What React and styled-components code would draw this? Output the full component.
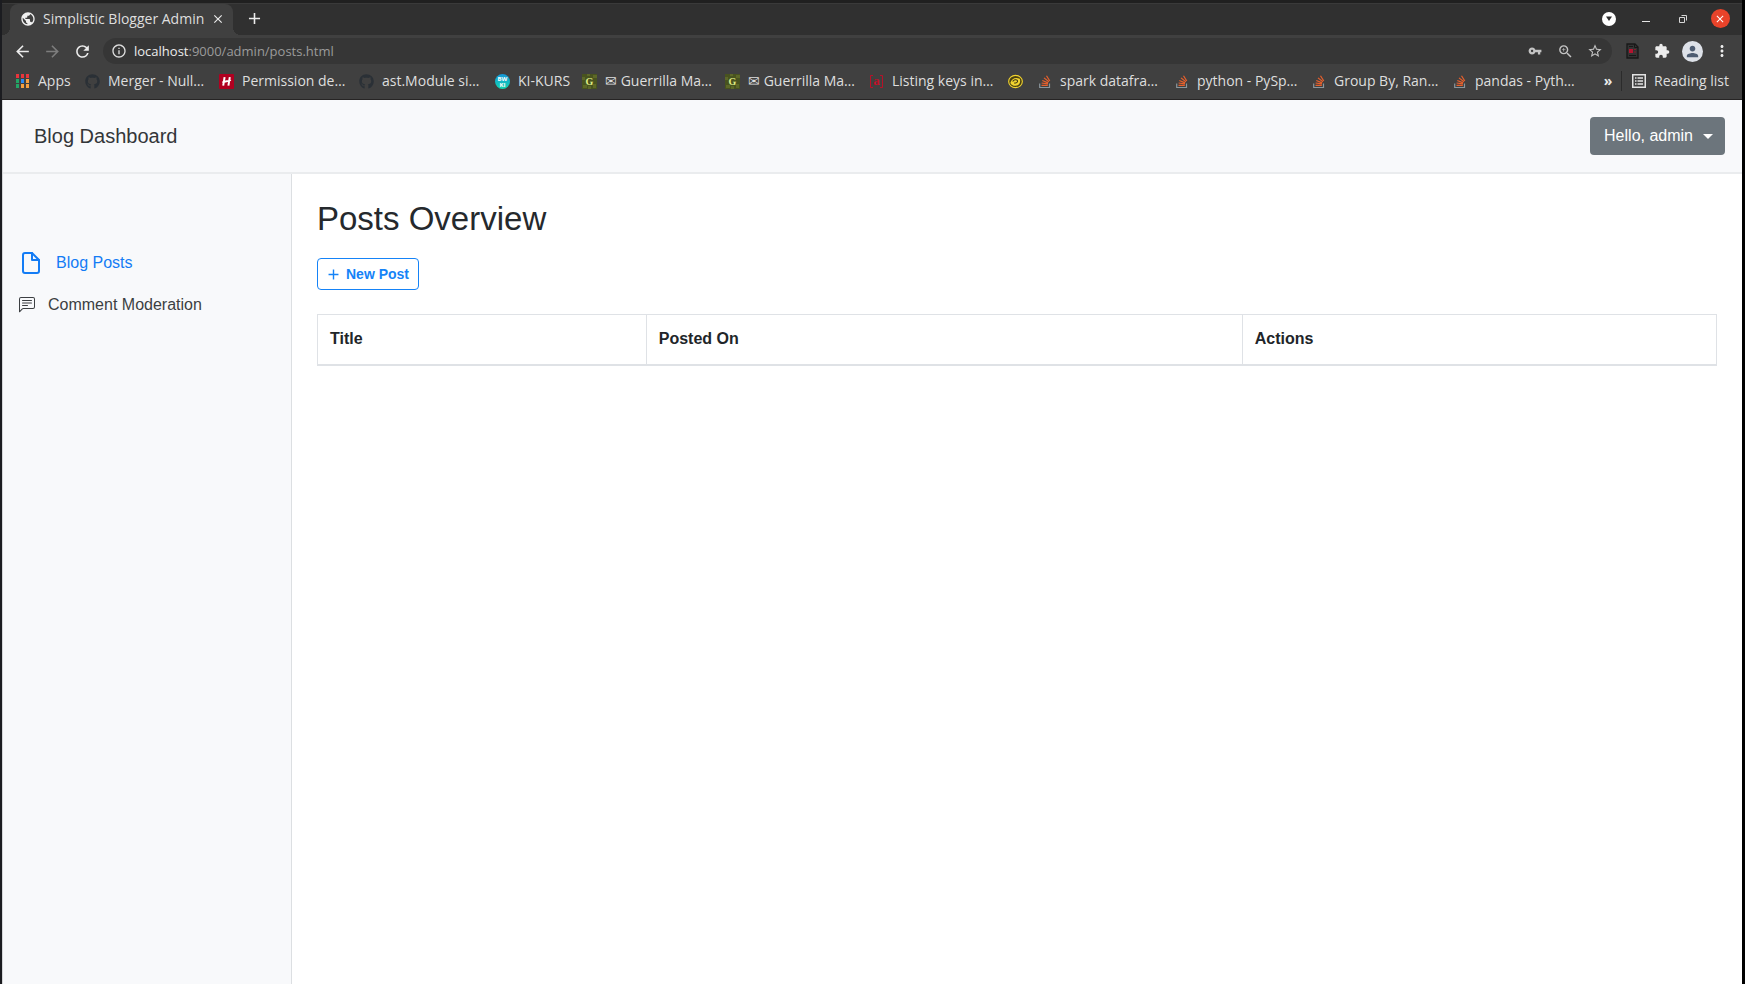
import React from "react";
import styled, { createGlobalStyle, css } from "styled-components";
import {
  MdAdd,
  MdArrowBack,
  MdArrowForward,
  MdClose,
  MdExtension,
  MdInfoOutline,
  MdMoreVert,
  MdPerson,
  MdPublic,
  MdRefresh,
  MdStarBorder,
  MdVpnKey,
  MdZoomIn,
} from "react-icons/md";
import { FaGithub } from "react-icons/fa";
import { FiFile } from "react-icons/fi";
import { BsChatLeftText } from "react-icons/bs";

const GlobalStyle = createGlobalStyle`
  *, *::before, *::after { box-sizing: border-box; }
  body {
    margin: 0;
    background: #1b1c20;
    font-family: "Liberation Sans", Arial, sans-serif;
    color: #212529;
  }
  button, input { font: inherit; color: inherit; }
  svg { display: block; flex: none; }
`;

const Window = styled.div`
  display: flex;
  flex-direction: column;
  min-height: 100vh;
  border-left: 2px solid #1b1c20;
  border-right: 3px solid #000;
`;

const Chrome = styled.header`
  flex: none;
  border-top: 3px solid #202020;
  border-bottom: 1px solid #262424;
  background: #404040;
  color: #dedede;
  font-family: "Open Sans", "Noto Sans", sans-serif;
  font-size: 14px;
  line-height: 20px;
`;

const TabStrip = styled.div`
  display: flex;
  align-items: center;
  height: 32px;
  padding: 0 7px 0 8px;
  background: #303030;
  border-top: 1px solid #3a3a3a;
`;

const Tab = styled.div`
  position: relative;
  display: flex;
  align-items: center;
  width: 223px;
  height: 31px;
  padding: 0 8px 2px 10px;
  gap: 7px;
  border-radius: 8px 8px 0 0;
  background: #404040;
  white-space: nowrap;

  &::before,
  &::after {
    content: "";
    position: absolute;
    bottom: 0;
    width: 8px;
    height: 8px;
  }

  &::before {
    right: 100%;
    background: radial-gradient(circle at 0 0, transparent 8px, #404040 8px);
  }

  &::after {
    left: 100%;
    background: radial-gradient(circle at 100% 0, transparent 8px, #404040 8px);
  }
`;

const TabTitle = styled.span`
  flex: 1;
`;

const IconButton = styled.button`
  display: flex;
  align-items: center;
  justify-content: center;
  flex: none;
  width: ${(p) => p.$width || 30}px;
  height: 24px;
  padding: 0;
  border: 0;
  background: none;
  color: ${(p) => p.$color || "#ececec"};
`;

const NewTab = styled(IconButton)`
  width: 42px;
  margin-bottom: 2px;
`;

const EndGroup = styled.div`
  display: flex;
  align-items: center;
  margin-left: auto;
  gap: 7px;
`;

const WindowControls = styled(EndGroup)`
  padding-bottom: 2px;
`;

const Disc = styled.span`
  display: flex;
  align-items: center;
  justify-content: center;
  width: ${(p) => p.$size}px;
  height: ${(p) => p.$size}px;
  border-radius: 50%;
  background: ${(p) => p.$fill};
  color: ${(p) => p.$color};
`;

const Toolbar = styled.div`
  display: flex;
  align-items: center;
  height: 32px;
  padding: 0 5px;
`;

const AddressBar = styled.form`
  display: flex;
  align-items: center;
  flex: 1;
  height: 26px;
  margin: 0 5px 0 6px;
  padding: 0 2px 0 8px;
  border-radius: 13px;
  background: #363636;
`;

const Url = styled.a`
  flex: 1;
  margin-left: 7px;
  color: #9b9b9b;
  font-size: 13px;
  text-decoration: none;

  strong {
    color: #ececec;
    font-weight: 400;
  }
`;

const BookmarksBar = styled.nav`
  display: flex;
  align-items: center;
  height: 32px;
  padding: 0 13px 4px 14px;
`;

const Bookmark = styled.a`
  display: flex;
  align-items: center;
  flex: none;
  width: ${(p) => p.$width}px;
  gap: 8px;
  color: #dedede;
  text-decoration: none;
  white-space: nowrap;
`;

const ReadingList = styled.button`
  display: flex;
  align-items: center;
  gap: 8px;
  padding: 0 0 0 10px;
  border: 0;
  border-left: 1px solid #2b2b2b;
  background: none;
  white-space: nowrap;
`;

const Page = styled.div`
  display: flex;
  flex: 1;
  flex-direction: column;
  background: #fff;
  border-left: 1px solid #d5d7d9;
  font-size: 16px;
  line-height: 26px;
`;

const Navbar = styled.div`
  display: flex;
  align-items: center;
  justify-content: space-between;
  height: 74px;
  padding: 0 17px 0 31px;
  background: #f8f9fb;
  border-bottom: 2px solid #eaecee;
`;

const Brand = styled.a`
  color: #333639;
  font-size: 20px;
  line-height: 30px;
  text-decoration: none;
`;

const UserMenu = styled.button`
  display: flex;
  align-items: center;
  gap: 10px;
  height: 38px;
  padding: 0 12px 0 14px;
  border: 0;
  border-radius: 4px;
  background: #6c757c;
  color: #fff;
  white-space: nowrap;

  &::after {
    content: "";
    border: 5px solid transparent;
    border-top-color: #fff;
    border-bottom: 0;
  }
`;

const Body = styled.div`
  display: flex;
  flex: 1;
`;

const Sidebar = styled.nav`
  display: flex;
  flex: none;
  flex-direction: column;
  width: 289px;
  padding: 68px 16px 0;
  background: #f8f9fb;
  border-right: 1px solid #dcdfe2;
`;

const SideLink = styled.a`
  display: flex;
  align-items: center;
  gap: 13px;
  height: 42px;
  color: #3c3f42;
  text-decoration: none;

  ${(p) =>
    p.$active &&
    css`
      color: #137cf5;
    `}
`;

const Main = styled.main`
  flex: 1;
  padding: 25px;
`;

const Title = styled.h1`
  margin: 0;
  color: #25292d;
  font-size: 33px;
  font-weight: 400;
  line-height: 40px;
`;

const NewPost = styled.button`
  display: flex;
  align-items: center;
  gap: 4px;
  height: 32px;
  margin: 19px 0 24px;
  padding: 0 9px 0 7px;
  border: 1px solid #1583f7;
  border-radius: 4px;
  background: #fff;
  color: #1583f7;
  font-size: 14px;
  font-weight: 700;
`;

const Table = styled.table`
  width: 100%;
  border-collapse: collapse;
  table-layout: fixed;
`;

const HeadCell = styled.th`
  width: ${(p) => p.$width};
  height: 50px;
  padding: 0 12px;
  border: 1px solid #dfe2e6;
  border-bottom-width: 2px;
  text-align: left;
`;

const AppsIcon = () => (
  <svg width="14" height="14" viewBox="0 0 14 14">
    {[
      ["#e8353c", 0, 0],
      ["#e8353c", 5, 0],
      ["#e8353c", 10, 0],
      ["#23a566", 0, 5],
      ["#2a8bf2", 5, 5],
      ["#f6a040", 10, 5],
      ["#23a566", 0, 10],
      ["#f6a040", 5, 10],
      ["#f6a040", 10, 10],
    ].map(([fill, x, y]) => (
      <rect key={`${x}-${y}`} x={x} y={y} width="3" height="4" fill={fill} />
    ))}
  </svg>
);

const GithubIcon = () => <FaGithub size={15} color="#2a3036" />;

const HIcon = () => (
  <svg width="15" height="15" viewBox="0 0 15 15">
    <rect width="15" height="15" rx="1" fill="#b00020" />
    <path d="M5.6 3.2 4.2 11.6M10.8 3.2 9.4 11.6M3.4 8.6C6 7 9 7.6 11.8 6" stroke="#fff" strokeWidth="2" fill="none" />
  </svg>
);

const KiIcon = () => (
  <svg width="15" height="15" viewBox="0 0 15 15">
    <defs>
      <linearGradient id="ki" x1="0" y1="0" x2="0" y2="1">
        <stop offset="0" stopColor="#1595d8" />
        <stop offset="1" stopColor="#12d8b0" />
      </linearGradient>
    </defs>
    <circle cx="7.5" cy="7.5" r="7.5" fill="url(#ki)" />
    <text x="7.5" y="7" fontSize="6" fontWeight="700" textAnchor="middle" fill="#fff">BW</text>
    <text x="7.5" y="13" fontSize="6" fontWeight="700" textAnchor="middle" fill="#fff">KI</text>
  </svg>
);

const GuerrillaIcon = () => (
  <svg width="15" height="15" viewBox="0 0 15 15">
    <rect width="15" height="15" fill="#48531f" />
    <path d="M0 3h3v3H0zM11 1h4v3h-4zM1 11h4v3H1zM11 10h3v4h-3zM5 0h3v2H5zM6 12h3v3H6z" fill="#5d6828" />
    <text x="7.5" y="11" fontSize="10" fontWeight="700" fontFamily="Liberation Serif" textAnchor="middle" fill="#e0ee88">G</text>
  </svg>
);

const ListingIcon = () => (
  <svg width="15" height="15" viewBox="0 0 15 15">
    <path d="M4 1.5H1.5v12H4M11 1.5h2.500v12H11" stroke="#b81128" fill="none" />
    <text x="7.500" y="11" fontSize="13" fontWeight="700" fontFamily="Liberation Serif" textAnchor="middle" fill="#c01128">a</text>
  </svg>
);

const CoinIcon = () => (
  <svg width="15" height="15" viewBox="0 0 16 15">
    <ellipse cx="8" cy="7.500" rx="7.300" ry="6.500" fill="#4a4010" stroke="#f1d32f" strokeWidth="1.200" />
    <path d="M2.500 9C4 4 8 2.500 12.500 4.500 14 8 12 12 8 12 5 12 3.500 11 2.500 9z" fill="#f1d32f" />
    <path d="M5 7.500C6 5.500 9 5 10 6.500 11 8.500 8 9.500 6.500 9" stroke="#3d3716" fill="none" strokeWidth="1.100" />
  </svg>
);

const StackIcon = () => (
  <svg width="13" height="15" viewBox="0 0 13 15">
    <path d="M.7 9.500v4h9.800v-4" stroke="#8b969c" strokeWidth="1.200" fill="none" />
    <path d="M2.500 11.400h6.300M2.600 9l6.300.8M3.300 6.500l5.800 2.400M5 3.900l4.900 3.900M7.500 1.700l3.300 5.300" stroke="#e8602c" strokeWidth="1.200" fill="none" />
  </svg>
);

const TabSearchIcon = () => (
  <svg width="8" height="6" viewBox="0 0 8 6">
    <path d="M1 0.500h6L4 5z" fill="#2d2d2d" />
  </svg>
);

const MinimizeIcon = () => (
  <svg width="14" height="14" viewBox="0 0 14 14">
    <path d="M3 9.500h8" stroke="#e6e6e6" />
  </svg>
);

const RestoreIcon = () => (
  <svg width="14" height="14" viewBox="0 0 14 14">
    <path d="M3.500 5.500h5v5h-5zM5.500 3.500h5v5" stroke="#d6d6d6" fill="none" />
  </svg>
);

const DocIcon = () => (
  <svg width="13" height="16" viewBox="0 0 13 16">
    <path d="M1 1h8l3 3v11H1z" fill="#333" stroke="#181818" strokeWidth="1.300" />
    <path d="M8.500 1v3.500H12M3 12.500h7M3 3.500h4" stroke="#181818" fill="none" />
    <path d="M3 6h4v4H3z" fill="#b41430" />
    <path d="M8 6.500h2M8 9h2" stroke="#851c2c" />
  </svg>
);

const ReadingIcon = () => (
  <svg width="14" height="14" viewBox="0 0 14 14">
    <path d="M.75.75h12.500v12.500H.75z" stroke="#e3e3e3" strokeWidth="1.500" fill="none" />
    <path d="M3 4h1.500M3 7h1.500M3 10h1.500M5.500 4H11M5.500 7H11M5.500 10H11" stroke="#e3e3e3" strokeWidth="1.300" />
  </svg>
);

const bookmarks = [
  { icon: AppsIcon, label: "Apps", width: 69 },
  { icon: GithubIcon, label: "Merger - Null…", width: 134 },
  { icon: HIcon, label: "Permission de…", width: 140 },
  { icon: GithubIcon, label: "ast.Module si…", width: 136 },
  { icon: KiIcon, label: "KI-KURS", width: 87 },
  { icon: GuerrillaIcon, label: "✉ Guerrilla Ma…", width: 143 },
  { icon: GuerrillaIcon, label: "✉ Guerrilla Ma…", width: 144 },
  { icon: ListingIcon, label: "Listing keys in…", width: 139 },
  { icon: CoinIcon, label: "", width: 31 },
  { icon: StackIcon, label: "spark datafra…", width: 137 },
  { icon: StackIcon, label: "python - PySp…", width: 137 },
  { icon: StackIcon, label: "Group By, Ran…", width: 141 },
  { icon: StackIcon, label: "pandas - Pyth…", width: 128 },
];

const columns = [
  { label: "Title", width: "23.5%" },
  { label: "Posted On", width: "42.6%" },
  { label: "Actions", width: "33.9%" },
];

function BrowserChrome() {
  return (
    <Chrome>
      <TabStrip>
        <Tab>
          <MdPublic size={16} color="#f1f1f1" />
          <TabTitle>Simplistic Blogger Admin</TabTitle>
          <IconButton $width={14} aria-label="Close tab">
            <MdClose size={14} />
          </IconButton>
        </Tab>
        <NewTab aria-label="New tab">
          <MdAdd size={19} />
        </NewTab>
        <WindowControls>
          <IconButton aria-label="Search tabs">
            <Disc $size={14} $fill="#fff">
              <TabSearchIcon />
            </Disc>
          </IconButton>
          <IconButton aria-label="Minimize">
            <MinimizeIcon />
          </IconButton>
          <IconButton aria-label="Restore">
            <RestoreIcon />
          </IconButton>
          <IconButton aria-label="Close window">
            <Disc $size={19} $fill="#e8432a" $color="#fff">
              <MdClose size={12} />
            </Disc>
          </IconButton>
        </WindowControls>
      </TabStrip>
      <Toolbar>
        <IconButton aria-label="Back">
          <MdArrowBack size={19} />
        </IconButton>
        <IconButton $color="#7d7d7d" aria-label="Forward">
          <MdArrowForward size={19} />
        </IconButton>
        <IconButton aria-label="Reload">
          <MdRefresh size={19} />
        </IconButton>
        <AddressBar>
          <MdInfoOutline size={16} />
          <Url href="#posts">
            <strong>localhost</strong>:9000/admin/posts.html
          </Url>
          <IconButton type="button" $color="#c4c4c4" aria-label="Passwords">
            <MdVpnKey size={14} />
          </IconButton>
          <IconButton type="button" $color="#c4c4c4" aria-label="Zoom">
            <MdZoomIn size={17} />
          </IconButton>
          <IconButton type="button" $color="#c4c4c4" aria-label="Bookmark this page">
            <MdStarBorder size={16} />
          </IconButton>
        </AddressBar>
        <IconButton aria-label="Document extension">
          <DocIcon />
        </IconButton>
        <IconButton aria-label="Extensions">
          <MdExtension size={16} />
        </IconButton>
        <IconButton aria-label="Profile">
          <Disc $size={21} $fill="#dde1e8" $color="#4d5c72">
            <MdPerson size={17} />
          </Disc>
        </IconButton>
        <IconButton aria-label="Menu">
          <MdMoreVert size={18} />
        </IconButton>
      </Toolbar>
      <BookmarksBar aria-label="Bookmarks">
        {bookmarks.map(({ icon: Icon, label, width }, i) => (
          <Bookmark key={i} href="#bookmark" $width={width}>
            <Icon />
            {label}
          </Bookmark>
        ))}
        <EndGroup>
          <IconButton $width={12} aria-label="More bookmarks">
            <b>»</b>
          </IconButton>
          <ReadingList>
            <ReadingIcon />
            Reading list
          </ReadingList>
        </EndGroup>
      </BookmarksBar>
    </Chrome>
  );
}

export default function App() {
  return (
    <Window>
      <GlobalStyle />
      <BrowserChrome />
      <Page>
        <Navbar>
          <Brand href="#dashboard">Blog Dashboard</Brand>
          <UserMenu>Hello, admin</UserMenu>
        </Navbar>
        <Body>
          <Sidebar>
            <SideLink href="#posts" $active>
              <FiFile size={24} />
              Blog Posts
            </SideLink>
            <SideLink href="#comments">
              <BsChatLeftText size={16} />
              Comment Moderation
            </SideLink>
          </Sidebar>
          <Main>
            <Title>Posts Overview</Title>
            <NewPost>
              <MdAdd size={17} />
              New Post
            </NewPost>
            <Table>
              <thead>
                <tr>
                  {columns.map(({ label, width }) => (
                    <HeadCell key={label} $width={width} scope="col">
                      {label}
                    </HeadCell>
                  ))}
                </tr>
              </thead>
            </Table>
          </Main>
        </Body>
      </Page>
    </Window>
  );
}
